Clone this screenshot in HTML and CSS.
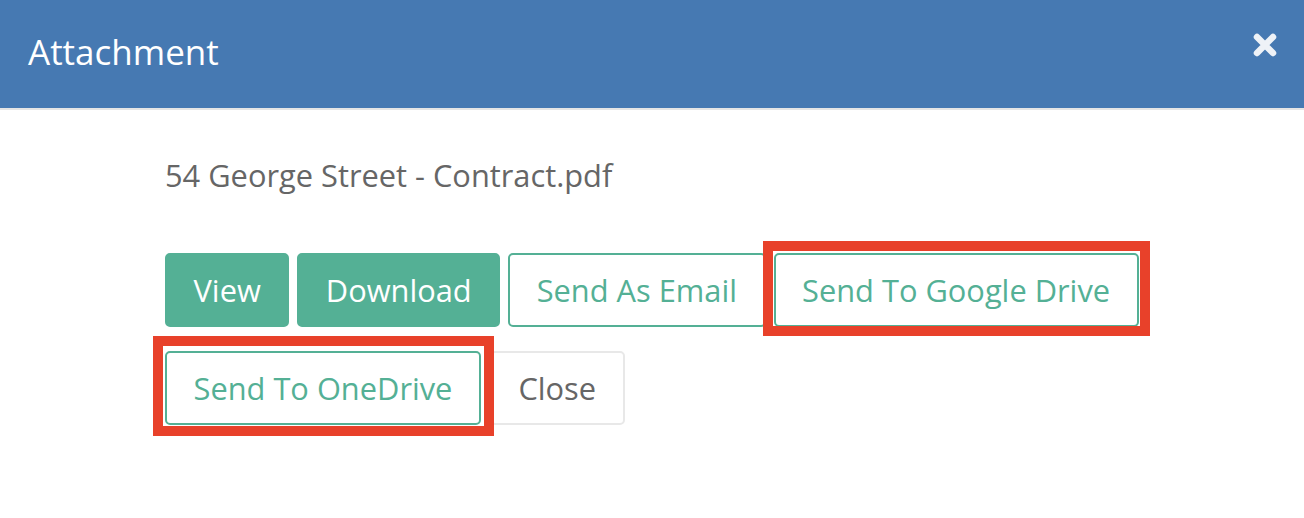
FILE: index.html
```html
<!DOCTYPE html>
<html lang="en">
<head>
    <meta charset="UTF-8">
    <meta name="viewport" content="width=device-width, initial-scale=1.0">
    <title>Attachment</title>
    <link rel="stylesheet" href="styles.css">
</head>
<body>
    <div class="modal">
        <div class="modal-header">
            <h1>Attachment</h1>
            <button class="close-x" aria-label="Close">
                <svg width="24" height="24" viewBox="0 0 24 24">
                    <path d="M4 4 L20 20 M20 4 L4 20" stroke="#eef2f7" stroke-width="6.5" stroke-linecap="round"/>
                </svg>
            </button>
        </div>
        <div class="modal-body">
            <p class="file-name">54 George Street - Contract.pdf</p>
            <div class="actions">
                <button class="btn btn-fill">View</button>
                <button class="btn btn-fill">Download</button>
                <button class="btn btn-line">Send As Email</button>
                <button class="btn btn-line marked mark-drive">Send To Google Drive</button>
                <button class="btn btn-line marked mark-onedrive">Send To OneDrive</button>
                <button class="btn btn-plain">Close</button>
            </div>
        </div>
    </div>
</body>
</html>
```

FILE: styles.css
```css
body {
    margin: 0;
    font-family: 'Open Sans', sans-serif;
    background: #fff;
}
.modal {
    min-height: 100vh;
}
.modal-header {
    height: 108px;
    display: flex;
    align-items: center;
    justify-content: space-between;
    padding: 0 28px;
    background: #4679b2;
    border-bottom: 2px solid #e5e5e5;
}
.modal-header h1 {
    margin: 0;
    margin-top: -6px;
    font-size: 35px;
    font-weight: 400;
    color: #fff;
}
.close-x {
    border: none;
    background: none;
    padding: 0;
    margin-right: -1px;
    margin-top: -18px;
    cursor: pointer;
    display: flex;
}
.modal-body {
    padding: 44px 100px 60px 165px;
}
.file-name {
    margin: 0;
    font-size: 30.8px;
    color: #666;
}
.actions {
    display: flex;
    flex-wrap: wrap;
    gap: 24px 8px;
    margin-top: 57px;
}
.btn {
    height: 74px;
    padding: 0 26.5px;
    font-family: 'Open Sans', sans-serif;
    font-size: 30.8px;
    border-radius: 5px;
    border: 2px solid transparent;
    background: #fff;
    cursor: pointer;
}
.btn-fill {
    background: #54b095;
    border-color: #54b095;
    color: #fff;
}
.btn-line {
    border-color: #54b095;
    color: #54b095;
}
.btn-plain {
    border-color: #e8e8e8;
    color: #666;
}

/* red annotation boxes drawn over the screenshot */
.marked {
    position: relative;
}
.marked::after {
    content: "";
    position: absolute;
    z-index: 1;
    border: 10px solid #e8412a;
    pointer-events: none;
}
.mark-drive::after {
    top: -14px;
    bottom: -11px;
    left: -13px;
    right: -13px;
}
.mark-onedrive {
    margin-right: 1px;
}
.mark-onedrive::after {
    top: -17px;
    bottom: -13px;
    left: -14px;
    right: -15px;
}
```
